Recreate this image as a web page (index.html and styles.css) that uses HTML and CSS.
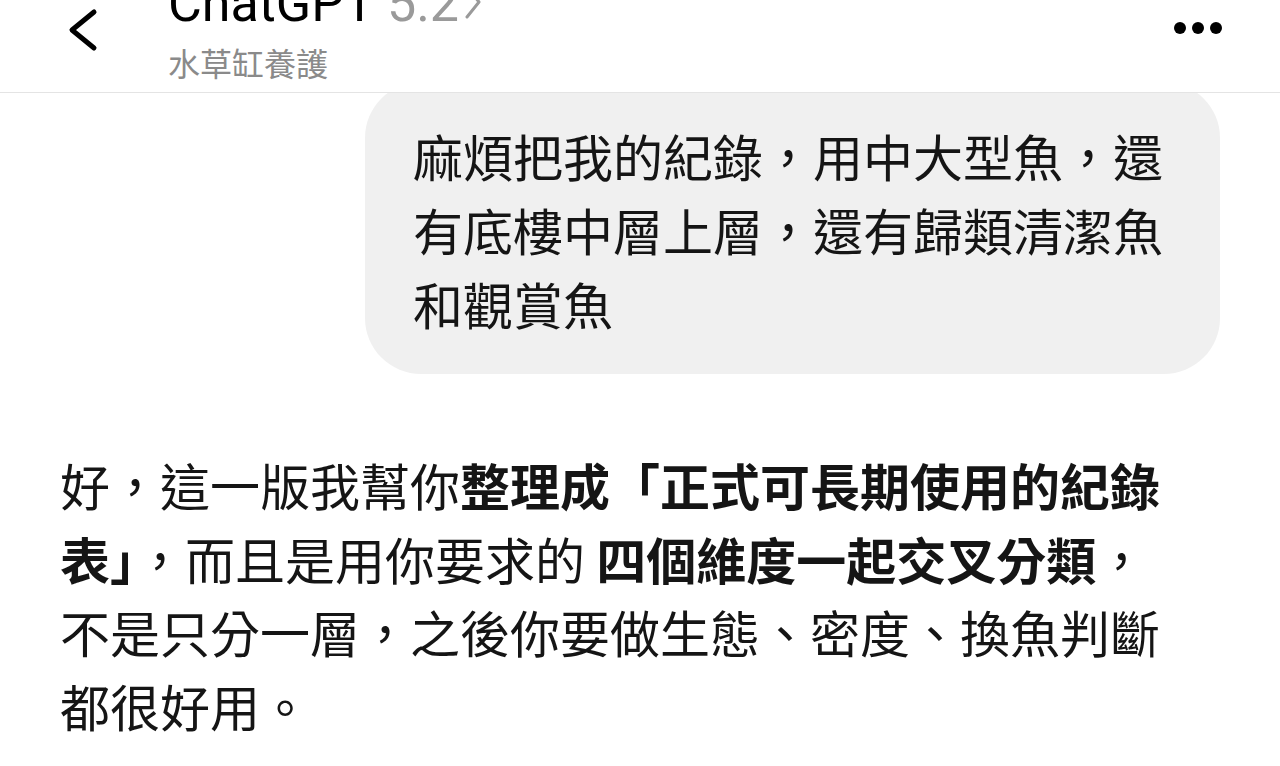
FILE: index.html
```html
<!DOCTYPE html>
<html>
  <head>
    <title>ChatGPT 5.2 - 水草缸養護</title>
    <link rel="stylesheet" href="styles.css">
  </head>
  <body>
    <div class="header">
      <svg class="back" width="48" height="60" viewBox="0 0 48 60">
        <path d="M34 12 L12 30 L34 48" fill="none" stroke="#000" stroke-width="5" stroke-linecap="round" stroke-linejoin="round"/>
      </svg>
      <div class="title-block">
        <div class="title">
          ChatGPT <span class="version">5.2</span><svg class="chev" width="20" height="40" viewBox="0 0 20 40">
            <path d="M4 4 L16 19 L4 34" fill="none" stroke="#9a9a9a" stroke-width="3" stroke-linecap="round" stroke-linejoin="round"/>
          </svg>
        </div>
        <div class="subtitle">水草缸養護</div>
      </div>
      <div class="menu">
        <span class="dot"></span>
        <span class="dot"></span>
        <span class="dot"></span>
      </div>
    </div>

    <div class="chat">
      <div class="user-row">
        <div class="bubble">麻煩把我的紀錄，用中大型魚，還有底樓中層上層，還有歸類清潔魚和觀賞魚</div>
      </div>
      <div class="reply">
        好，這一版我幫你<b>整理成「正式可長期使用的紀錄表」</b>，而且是用你要求的 <b>四個維度一起交叉分類</b>，不是只分一層，之後你要做生態、密度、換魚判斷都很好用。
      </div>
    </div>
  </body>
</html>
```

FILE: styles.css
```css
body {
  margin: 0;
  background: #fff;
  color: #111;
  font-family: "Noto Sans CJK TC", Roboto, sans-serif;
  overflow: hidden;
}
.header {
  position: relative;
  z-index: 1;
  display: flex;
  align-items: flex-start;
  height: 92px;
  padding-left: 60px;
  background: #fff;
  border-bottom: 1px solid #e4e4e4;
}
.back {
  display: block;
}
.title-block {
  margin-left: 60px;
}
.title {
  margin-top: -22px;
  font-family: Roboto, "Noto Sans CJK TC", sans-serif;
  font-size: 52px;
  line-height: 52px;
  color: #000;
  white-space: nowrap;
}
.version {
  color: #9a9a9a;
}
.chev {
  vertical-align: -2px;
  margin-left: 4px;
}
.subtitle {
  margin-top: 12px;
  font-size: 32px;
  line-height: 40px;
  color: #8a8a8a;
}
.menu {
  display: flex;
  gap: 6px;
  margin-left: auto;
  margin-right: 58px;
  margin-top: 22px;
}
.dot {
  width: 12px;
  height: 12px;
  border-radius: 50%;
  background: #000;
}
.chat {
  margin-top: -11px;
}
.user-row {
  display: flex;
  justify-content: flex-end;
  padding-right: 60px;
}
.bubble {
  width: 855px;
  box-sizing: border-box;
  padding: 36px 48px 34px 48px;
  background: #f0f0f0;
  border-radius: 56px;
  font-size: 50px;
  line-height: 74px;
  color: #151515;
}
.reply {
  padding: 74px 100px 0 60px;
  font-size: 50px;
  line-height: 73.5px;
  color: #151515;
}
.reply b {
  font-weight: 700;
}
```
